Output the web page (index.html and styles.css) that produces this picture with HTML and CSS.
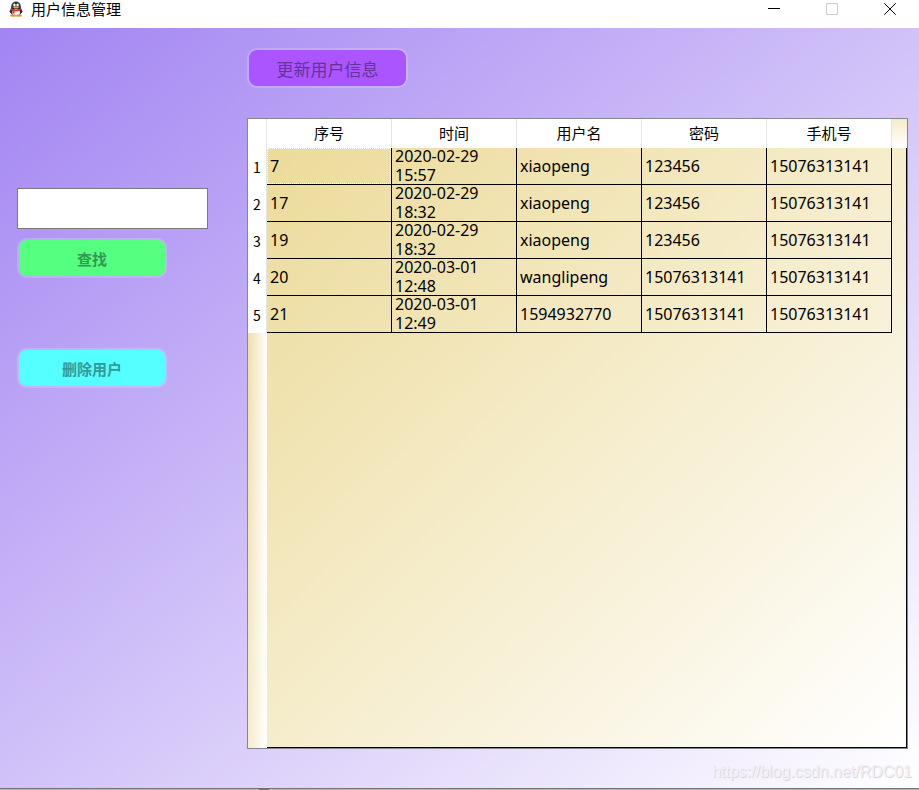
FILE: index.html
```html
<!DOCTYPE html>
<html lang="zh-CN">
<head>
<meta charset="utf-8">
<title>用户信息管理</title>
<link rel="stylesheet" href="styles.css">
</head>
<body>
<header class="titlebar">
  <svg class="logo" viewBox="0 0 16 16" aria-hidden="true">
    <path d="M3.500 6 1.500 10.500 2.500 12 13.500 12 14.500 10.500 12.500 6z" fill="#2b2b33"/>
    <ellipse cx="8" cy="5.500" rx="4.800" ry="5" fill="#34343e"/>
    <ellipse cx="8" cy="11" rx="5.400" ry="4.200" fill="#26262c"/>
    <ellipse cx="8" cy="11.500" rx="4" ry="3.300" fill="#f4f4f4"/>
    <ellipse cx="6.400" cy="4" rx="1.200" ry="1.500" fill="#fff"/>
    <ellipse cx="9.600" cy="4" rx="1.200" ry="1.500" fill="#fff"/>
    <ellipse cx="8" cy="6.500" rx="2.900" ry="1" fill="#f2a11d"/>
    <path d="M3.300 7.500Q8 10 12.700 7.500L13 9.300Q8 11.500 3 9.300z" fill="#e0312a"/>
    <path d="M4.500 9.500h2v3h-2z" fill="#d92a26"/>
    <ellipse cx="5" cy="14.600" rx="2.900" ry="1.200" fill="#e8951f"/>
    <ellipse cx="11" cy="14.600" rx="2.900" ry="1.200" fill="#e8951f"/>
  </svg>
  <h1 class="title">用户信息管理</h1>
  <div class="controls">
    <button class="control" type="button" aria-label="最小化"><svg viewBox="0 0 12 12"><path d="M0 5.500h12" stroke="#000"/></svg></button>
    <button class="control" type="button" aria-label="最大化" disabled><svg viewBox="0 0 12 12"><path d="M.5.5h11v11H.5z" stroke="#ccc"/></svg></button>
    <button class="control" type="button" aria-label="关闭"><svg viewBox="0 0 12 12"><path d="M.3.300l11.400 11.400M11.700.3.300 11.700" stroke="#000"/></svg></button>
  </div>
</header>
<main class="content">
  <form class="side">
    <input class="search" type="text" aria-label="查找用户">
    <button class="btn find" type="button">查找</button>
    <button class="btn delete" type="button">删除用户</button>
  </form>
  <section class="panel">
    <button class="btn refresh" type="button">更新用户信息</button>
    <div class="frame">
      <table class="users">
        <thead>
          <tr><td class="num"></td><th scope="col">序号</th><th scope="col">时间</th><th scope="col">用户名</th><th scope="col">密码</th><th scope="col">手机号</th></tr>
        </thead>
        <tbody>
          <tr><th class="num" scope="row">1</th><td class="current"><div class="cell">7</div></td><td><div class="cell">2020-02-29 15:57</div></td><td><div class="cell">xiaopeng</div></td><td><div class="cell">123456</div></td><td><div class="cell">15076313141</div></td></tr>
          <tr><th class="num" scope="row">2</th><td><div class="cell">17</div></td><td><div class="cell">2020-02-29 18:32</div></td><td><div class="cell">xiaopeng</div></td><td><div class="cell">123456</div></td><td><div class="cell">15076313141</div></td></tr>
          <tr><th class="num" scope="row">3</th><td><div class="cell">19</div></td><td><div class="cell">2020-02-29 18:32</div></td><td><div class="cell">xiaopeng</div></td><td><div class="cell">123456</div></td><td><div class="cell">15076313141</div></td></tr>
          <tr><th class="num" scope="row">4</th><td><div class="cell">20</div></td><td><div class="cell">2020-03-01 12:48</div></td><td><div class="cell">wanglipeng</div></td><td><div class="cell">15076313141</div></td><td><div class="cell">15076313141</div></td></tr>
          <tr><th class="num" scope="row">5</th><td><div class="cell">21</div></td><td><div class="cell">2020-03-01 12:49</div></td><td><div class="cell">1594932770</div></td><td><div class="cell">15076313141</div></td><td><div class="cell">15076313141</div></td></tr>
        </tbody>
      </table>
    </div>
    <p class="watermark">https://blog.csdn.net/RDC01</p>
  </section>
</main>
<footer class="edge"></footer>
</body>
</html>
```
FILE: styles.css
```css
* {
  box-sizing: border-box;
}

body {
  margin: 0;
  min-height: 100vh;
  display: flex;
  flex-direction: column;
  font-family: "Noto Sans", "Noto Sans CJK SC", sans-serif;
  font-size: 15px;
  color: #000;
}

.titlebar {
  height: 28px;
  display: flex;
  align-items: flex-start;
  background: #fff;
}

.logo {
  width: 16px;
  height: 16px;
  margin: 1px 7px 0 8px;
}

.title {
  margin: 0;
  font-family: "Noto Sans CJK SC", sans-serif;
  font-size: 15px;
  font-weight: 400;
  line-height: 18px;
}

.controls {
  margin-left: auto;
  display: flex;
}

.control {
  width: 58px;
  height: 18px;
  padding: 0;
  border: 0;
  background: none;
  display: flex;
  align-items: center;
  justify-content: center;
}

.control svg {
  width: 12px;
  height: 12px;
  fill: none;
}

.content {
  flex: 1;
  display: grid;
  grid-template-columns: 191px 1fr;
  column-gap: 39px;
  padding: 20px 11px 0 17px;
  background: linear-gradient(to bottom right, #a284f2, #fff);
}

.side {
  display: flex;
  flex-direction: column;
  align-items: flex-start;
  padding-top: 140px;
}

.search {
  width: 100%;
  height: 41px;
  padding: 0 8px;
  border: 1px solid #7a7a7a;
  background: #fff;
  font: inherit;
}

.btn {
  height: 40px;
  padding: 0;
  border: 2px solid rgba(255, 255, 255, 0.18);
  border-radius: 10px;
  background-clip: padding-box;
  font-family: "Noto Sans CJK SC", sans-serif;
}

.find,
.delete {
  width: 150px;
  font-size: 15px;
  font-weight: 700;
}

.find {
  margin-top: 9px;
  background-color: #55ff7f;
  color: #339950;
}

.delete {
  margin-top: 70px;
  background-color: #55ffff;
  color: #339999;
}

.refresh {
  width: 161px;
  align-self: flex-start;
  background-color: #aa55ff;
  color: #663399;
  font-size: 17px;
}

.panel {
  min-width: 0;
  display: flex;
  flex-direction: column;
}

.frame {
  flex: 1;
  margin-top: 30px;
  padding-right: 15px;
  border: 1px solid #828790;
  background:
    linear-gradient(to right, rgba(255, 255, 255, 0), #fff) 0 0 / 19px 100% no-repeat,
    linear-gradient(rgba(255, 255, 255, 0), #fff) 100% 0 / 15px 29px no-repeat,
    linear-gradient(#000, #000) 100% 29px / 1px 100% no-repeat,
    linear-gradient(#000, #000) 19px 100% / 100% 1px no-repeat,
    linear-gradient(to bottom right, #ebd995, #fff);
}

.users {
  width: 100%;
  table-layout: fixed;
  border-collapse: separate;
  border-spacing: 0;
}

.users td,
.users th {
  padding: 0;
  font-weight: 400;
}

.users thead th,
.users thead td {
  height: 29px;
  padding-bottom: 2px;
  background: #fff;
  border-right: 1px solid #e5e5e5;
  font-family: "Noto Sans CJK SC", sans-serif;
  line-height: 20px;
}

.users .num {
  width: 19px;
  background: #fff;
  border-right: 1px solid #e5e5e5;
  font-family: "Noto Sans CJK SC", sans-serif;
  font-size: 14px;
  line-height: 20px;
}

.users tbody td {
  border-right: 1px solid #000;
  border-bottom: 1px solid #000;
}

.cell {
  height: 36px;
  padding: 0 3px;
  display: flex;
  align-items: center;
  font-size: 16px;
  line-height: 19px;
}

.current .cell {
  outline: 1px dotted #fff;
  outline-offset: -1px;
}

.watermark {
  margin: 0 -4px 0 0;
  height: 39px;
  padding-top: 11px;
  text-align: right;
  font-family: "Liberation Sans", sans-serif;
  font-size: 16px;
  line-height: 24px;
  color: #f3f0f8;
  text-shadow: 1px 1px 1px #d4d2d8;
}

.edge {
  height: 2px;
  background: linear-gradient(#737373, #737373) 259px 0 / 10px 100% no-repeat #b8b8b8;
  border-top: 1px solid #737373;
}
```
